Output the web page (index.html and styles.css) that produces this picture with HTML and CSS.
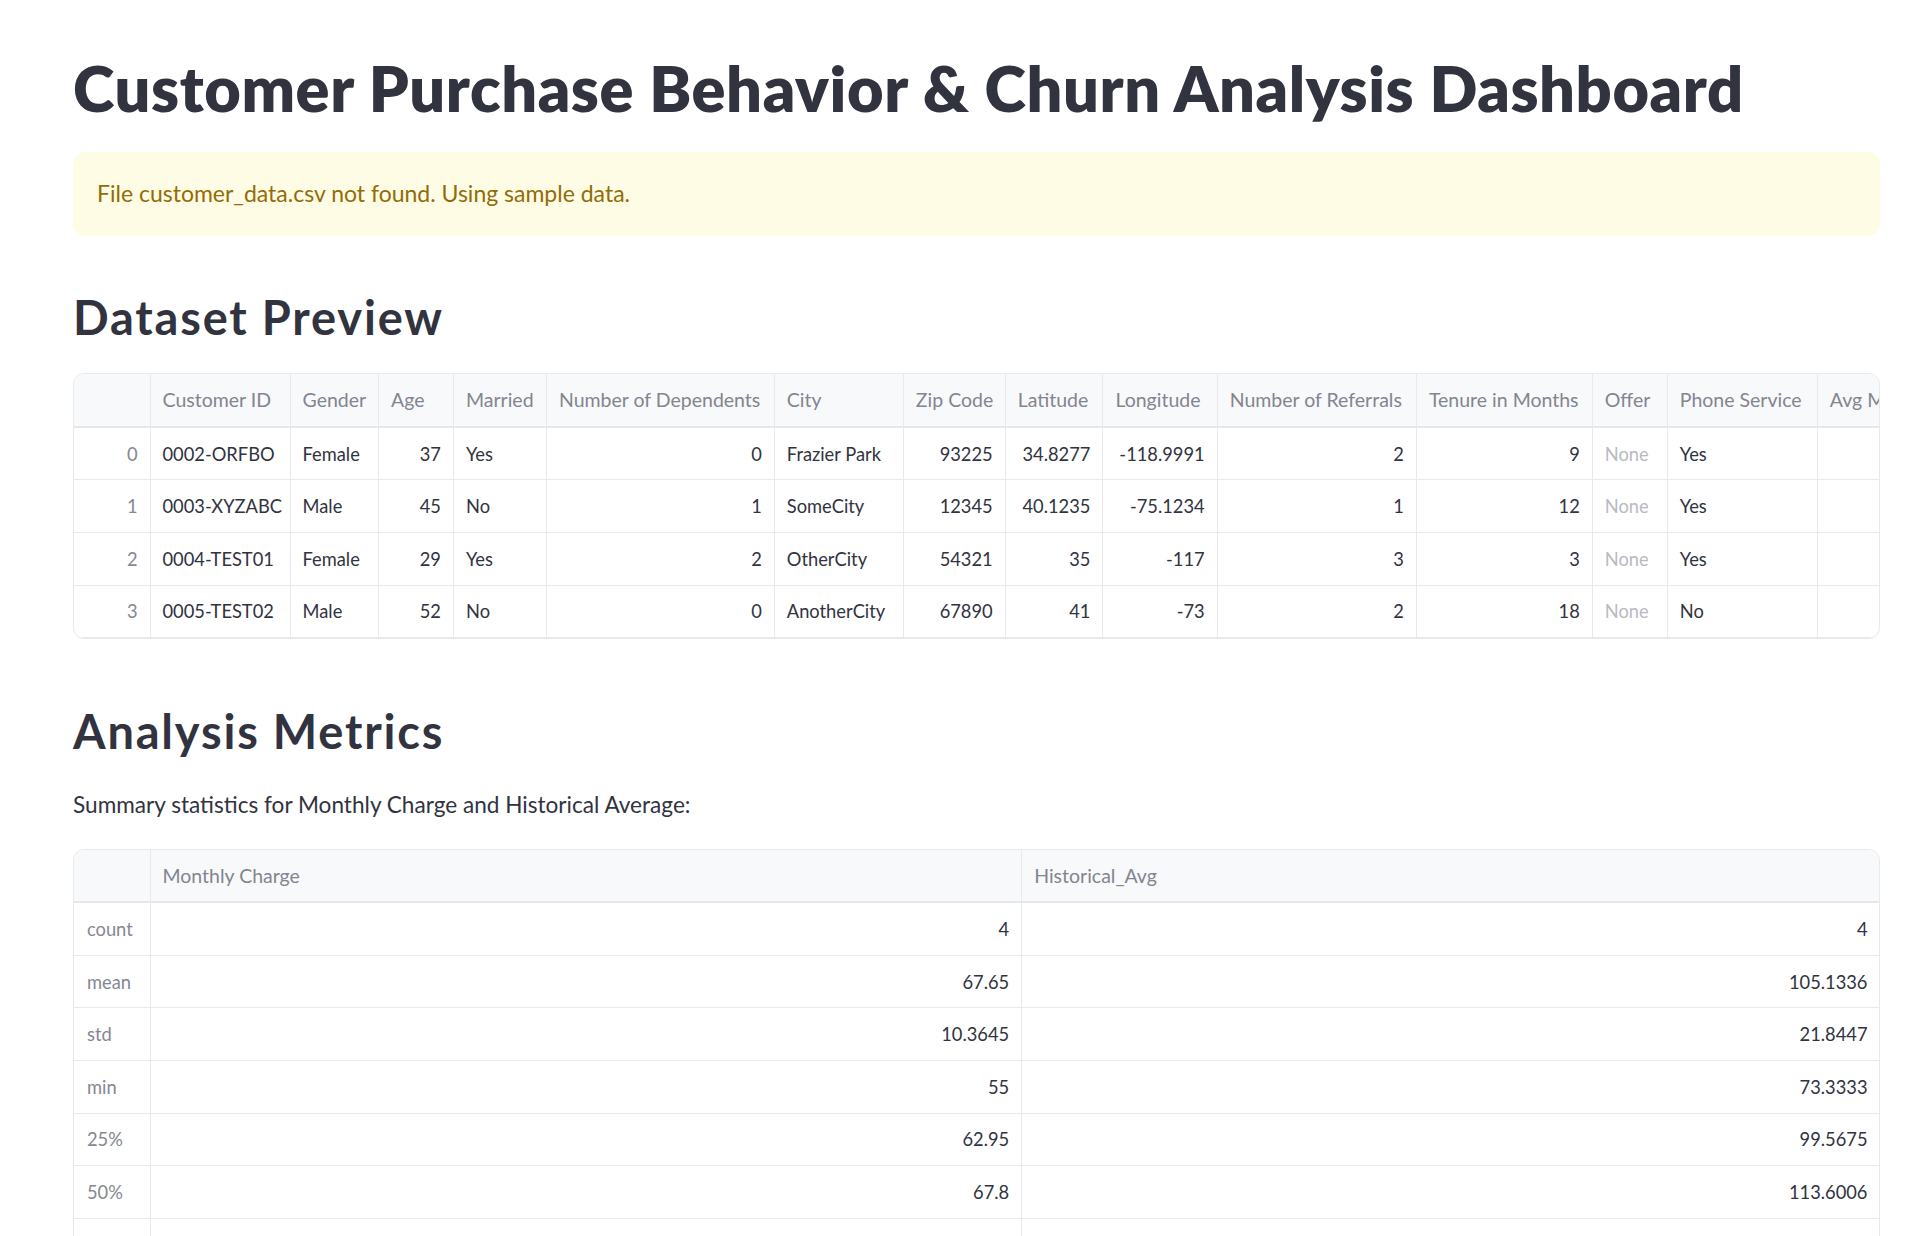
FILE: index.html
```html
<!DOCTYPE html>
<html lang="en">
<head>
<meta charset="utf-8">
<title>Customer Purchase Behavior &amp; Churn Analysis Dashboard</title>
<link rel="stylesheet" href="styles.css">
</head>
<body>
<main class="app">
  <h1 class="title">Customer Purchase Behavior &amp; Churn Analysis Dashboard</h1>
  <div class="alert">File customer_data.csv not found. Using sample data.</div>

  <h2 class="section section-first">Dataset Preview</h2>
  <div class="grid-wrap">
    <table class="grid preview">
      <colgroup>
        <col class="c-idx"><col class="c-id"><col class="c-gender"><col class="c-age"><col class="c-married">
        <col class="c-dep"><col class="c-city"><col class="c-zip"><col class="c-lat"><col class="c-lon">
        <col class="c-ref"><col class="c-ten"><col class="c-offer"><col class="c-phone"><col class="c-avg">
      </colgroup>
      <thead>
        <tr>
          <th></th><th>Customer ID</th><th>Gender</th><th>Age</th><th>Married</th>
          <th>Number of Dependents</th><th>City</th><th class="r">Zip Code</th><th>Latitude</th><th>Longitude</th>
          <th>Number of Referrals</th><th>Tenure in Months</th><th>Offer</th><th>Phone Service</th><th>Avg Monthly Long Distance Charges</th>
        </tr>
      </thead>
      <tbody>
        <tr>
          <td class="idx r">0</td><td>0002-ORFBO</td><td>Female</td><td class="r">37</td><td>Yes</td>
          <td class="r">0</td><td>Frazier Park</td><td class="r">93225</td><td class="r">34.8277</td><td class="r">-118.9991</td>
          <td class="r">2</td><td class="r">9</td><td class="none">None</td><td>Yes</td><td></td>
        </tr>
        <tr>
          <td class="idx r">1</td><td>0003-XYZABC</td><td>Male</td><td class="r">45</td><td>No</td>
          <td class="r">1</td><td>SomeCity</td><td class="r">12345</td><td class="r">40.1235</td><td class="r">-75.1234</td>
          <td class="r">1</td><td class="r">12</td><td class="none">None</td><td>Yes</td><td></td>
        </tr>
        <tr>
          <td class="idx r">2</td><td>0004-TEST01</td><td>Female</td><td class="r">29</td><td>Yes</td>
          <td class="r">2</td><td>OtherCity</td><td class="r">54321</td><td class="r">35</td><td class="r">-117</td>
          <td class="r">3</td><td class="r">3</td><td class="none">None</td><td>Yes</td><td></td>
        </tr>
        <tr>
          <td class="idx r">3</td><td>0005-TEST02</td><td>Male</td><td class="r">52</td><td>No</td>
          <td class="r">0</td><td>AnotherCity</td><td class="r">67890</td><td class="r">41</td><td class="r">-73</td>
          <td class="r">2</td><td class="r">18</td><td class="none">None</td><td>No</td><td></td>
        </tr>
      </tbody>
    </table>
  </div>

  <h2 class="section section-second">Analysis Metrics</h2>
  <p class="summary">Summary statistics for Monthly Charge and Historical Average:</p>
  <div class="grid-wrap">
    <table class="grid stats">
      <colgroup>
        <col class="c-idx"><col class="c-monthly"><col class="c-hist">
      </colgroup>
      <thead>
        <tr><th></th><th>Monthly Charge</th><th>Historical_Avg</th></tr>
      </thead>
      <tbody>
        <tr><td class="idx">count</td><td class="r">4</td><td class="r">4</td></tr>
        <tr><td class="idx">mean</td><td class="r">67.65</td><td class="r">105.1336</td></tr>
        <tr><td class="idx">std</td><td class="r">10.3645</td><td class="r">21.8447</td></tr>
        <tr><td class="idx">min</td><td class="r">55</td><td class="r">73.3333</td></tr>
        <tr><td class="idx">25%</td><td class="r">62.95</td><td class="r">99.5675</td></tr>
        <tr><td class="idx">50%</td><td class="r">67.8</td><td class="r">113.6006</td></tr>
        <tr><td class="idx">75%</td><td class="r">72.5</td><td class="r">119.1667</td></tr>
        <tr><td class="idx">max</td><td class="r">80.35</td><td class="r">124.9</td></tr>
      </tbody>
    </table>
  </div>
</main>
</body>
</html>
```

FILE: styles.css
```css
html, body {
  margin: 0;
  padding: 0;
  background: #ffffff;
}

body {
  font-family: Lato, "Noto Sans", "Liberation Sans", sans-serif;
  color: #31333f;
}

.app {
  width: 1807px;
  padding: 49.7px 0 40px 73px;
}

.title {
  margin: 0;
  font-size: 63px;
  line-height: 1.2;
  font-weight: 800;
  letter-spacing: 0.6px;
  color: #31333f;
  white-space: nowrap;
}

.alert {
  margin-top: 26.7px;
  background: #fffce6;
  color: #926c05;
  border-radius: 12px;
  padding: 23px 24px 24.6px;
  font-size: 23px;
  line-height: 36px;
}

.section {
  margin: 0;
  font-size: 47px;
  line-height: 1.2;
  font-weight: 700;
  letter-spacing: 1.8px;
  color: #31333f;
}

.section-first {
  margin-top: 53.9px;
  margin-bottom: 27.3px;
}

.section-second {
  margin-top: 64.2px;
}

.summary {
  margin: 27px 0 26px;
  font-size: 22.6px;
  line-height: 36px;
}

.grid-wrap {
  border: 1px solid #e8e9ed;
  border-radius: 11px;
  overflow: hidden;
}

.grid {
  border-collapse: collapse;
  table-layout: fixed;
  font-size: 18.3px;
}

.preview {
  width: 2100px;
}

.stats {
  width: 1806px;
}

.grid th,
.grid td {
  height: 51.6px;
  padding: 0 12px;
  border: 1px solid #e8e9ed;
  white-space: nowrap;
  overflow: hidden;
  vertical-align: middle;
  text-align: left;
}

.grid thead th {
  border-top: none;
}

.grid tr > :first-child {
  border-left: none;
}

.grid th {
  background: #f8f9fb;
  color: #83858f;
  font-size: 19.5px;
  font-weight: 400;
  border-bottom: 2px solid #e6e7eb;
}

.grid td {
  color: #31333f;
}

.grid td.idx {
  color: #858791;
}

.grid td.none {
  color: #b9bac0;
}

.grid .r {
  text-align: right;
}

.c-idx { width: 76px; }
.c-id { width: 140px; }
.c-gender { width: 88.4px; }
.c-age { width: 75px; }
.c-married { width: 93px; }
.c-dep { width: 227.8px; }
.c-city { width: 129px; }
.c-zip { width: 101.8px; }
.c-lat { width: 97.7px; }
.c-lon { width: 114.3px; }
.c-ref { width: 199.2px; }
.c-ten { width: 175.8px; }
.c-offer { width: 75px; }
.c-phone { width: 150px; }
.c-avg { width: 356px; }

.c-monthly { width: 871.7px; }
.c-hist { width: 858.3px; }

.stats td.idx {
  text-align: left;
  padding-left: 13px;
}
```
